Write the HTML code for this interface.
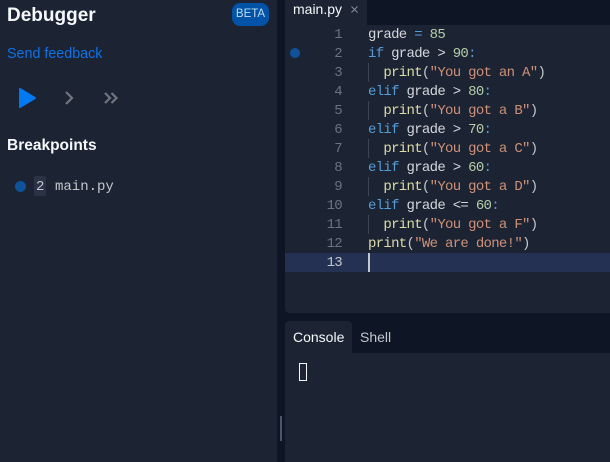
<!DOCTYPE html>
<html><head><meta charset="utf-8">
<style>
html,body{margin:0;padding:0;width:610px;height:462px;overflow:hidden;background:#0e1525;font-family:"Liberation Sans",sans-serif}
.a{position:absolute;white-space:pre}
.left{position:absolute;left:0;top:0;width:277px;height:462px;background:#1c2333}
.ed{position:absolute;left:285px;top:25px;width:325px;height:288px;background:#1c2333;border-radius:0 0 0 4px}
.active{position:absolute;left:285px;top:253px;width:325px;height:19px;background:#243152}
.code{font-family:"Liberation Mono",monospace;font-size:14px;letter-spacing:-.7px;line-height:19px;color:#d4d8dc;left:368px;top:26px}
.nums{font-family:"Liberation Mono",monospace;font-size:14px;letter-spacing:-.7px;line-height:19px;color:#6b7280;left:300px;top:26px;width:42px;text-align:right}
.k{color:#569cd6}.n{color:#b5cea8}.s{color:#ce9178}.f{color:#dcdcaa}.p{color:#569cd6}
.w{color:#c2c8cc}
.guide{position:absolute;left:368px;width:1px;height:19px;background:#3d4554}
</style></head><body>
<div class="left"></div>
<div class="a" style="left:7px;top:4px;font-size:19px;line-height:24px;font-weight:700;color:#f5f9fc">Debugger</div>
<div class="a" style="left:232px;top:3px;width:37px;height:23px;background:#0053a6;border-radius:8px;color:#c2d9f5;font-size:11.5px;line-height:23px;text-align:center">BETA</div>
<div class="a" style="left:7px;top:46px;font-size:14.3px;line-height:17px;color:#0f72e8">Send feedback</div>
<svg class="a" style="left:0;top:75px" width="130" height="45" viewBox="0 0 130 45">
<path d="M20 14 L35 23 L20 32 Z" fill="#0079f2" stroke="#0079f2" stroke-width="2" stroke-linejoin="round"/>
<path d="M66 17 L72 23 L66 29" fill="none" stroke="#70757d" stroke-width="2.2"/>
<path d="M105 18 L110 23 L105 28 M111.5 18 L116.5 23 L111.5 28" fill="none" stroke="#70757d" stroke-width="2.2"/>
</svg>
<div class="a" style="left:7px;top:136px;font-size:15.5px;line-height:19px;font-weight:700;color:#f5f9fc">Breakpoints</div>
<div class="a" style="left:15px;top:181px;width:11px;height:11px;border-radius:50%;background:#0f5299"></div>
<div class="a" style="left:34px;top:176px;width:12px;height:20px;background:#2b3245;border-radius:2px"></div>
<div class="a" style="left:36px;top:178px;font-family:'Liberation Mono',monospace;font-size:14px;line-height:18px;color:#c2c8cc">2</div>
<div class="a" style="left:55px;top:178px;font-family:'Liberation Mono',monospace;font-size:14px;line-height:18px;color:#c2c8cc">main.py</div>
<div class="a" style="left:280px;top:416px;width:2px;height:25px;background:#4e5569"></div>

<div class="a" style="left:285px;top:0;width:82px;height:25px;background:#1c2333"></div>
<div class="a" style="left:293px;top:1px;font-size:14px;line-height:17px;color:#f5f9fc">main.py</div>
<svg class="a" style="left:351px;top:6px" width="7" height="7" viewBox="0 0 7 7"><path d="M.5 .5 L6.5 6.5 M6.5 .5 L.5 6.5" stroke="#8a8f98" stroke-width="1" fill="none"/></svg>

<div class="ed"></div>
<div class="active"></div>
<div class="a" style="left:290px;top:48px;width:10px;height:10px;border-radius:50%;background:#0f5299"></div>
<div class="guide" style="top:63px"></div>
<div class="guide" style="top:101px"></div>
<div class="guide" style="top:139px"></div>
<div class="guide" style="top:177px"></div>
<div class="guide" style="top:215px"></div>
<div class="a nums">1
2
3
4
5
6
7
8
9
10
11
12
<span style="color:#c2c8cc">13</span></div>
<div class="a code">grade <span class="p">=</span> <span class="n">85</span>
<span class="k">if</span> grade &gt; <span class="n">90</span><span class="p">:</span>
  <span class="f">print</span><span class="w">(</span><span class="s">"You got an A"</span><span class="w">)</span>
<span class="k">elif</span> grade &gt; <span class="n">80</span><span class="p">:</span>
  <span class="f">print</span><span class="w">(</span><span class="s">"You got a B"</span><span class="w">)</span>
<span class="k">elif</span> grade &gt; <span class="n">70</span><span class="p">:</span>
  <span class="f">print</span><span class="w">(</span><span class="s">"You got a C"</span><span class="w">)</span>
<span class="k">elif</span> grade &gt; <span class="n">60</span><span class="p">:</span>
  <span class="f">print</span><span class="w">(</span><span class="s">"You got a D"</span><span class="w">)</span>
<span class="k">elif</span> grade &lt;= <span class="n">60</span><span class="p">:</span>
  <span class="f">print</span><span class="w">(</span><span class="s">"You got a F"</span><span class="w">)</span>
<span class="f">print</span><span class="w">(</span><span class="s">"We are done!"</span><span class="w">)</span></div>
<div class="a" style="left:368px;top:253px;width:2px;height:19px;background:#c2c8cc"></div>

<div class="a" style="left:285px;top:321px;width:67px;height:32px;background:#1c2333;border-radius:4px 4px 0 0"></div>
<div class="a" style="left:293px;top:329px;font-size:14px;line-height:17px;color:#f5f9fc">Console</div>
<div class="a" style="left:360px;top:329px;font-size:14px;line-height:17px;color:#c2c8cc">Shell</div>
<div class="a" style="left:285px;top:353px;width:325px;height:109px;background:#1c2333"></div>
<div class="a" style="left:299px;top:363px;width:6px;height:16px;border:1px solid #f5f9fc"></div>
</body></html>
